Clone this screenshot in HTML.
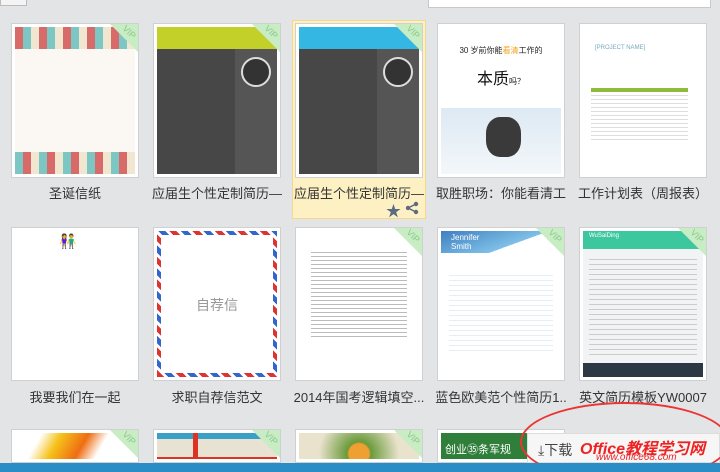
<!DOCTYPE html>
<html><head><meta charset="utf-8">
<style>
*{margin:0;padding:0;box-sizing:border-box}
html{width:720px;height:472px;overflow:hidden}
body{width:720px;height:472px;overflow:hidden;background:#e3e4e6;font-family:"Liberation Sans","Noto Sans CJK SC",sans-serif;position:relative}
.card{position:absolute;width:128px;background:#fff;border:1px solid #cfd0d2;padding:3px;overflow:hidden}
.th{width:100%;height:100%;position:relative;overflow:hidden}
.vip{position:absolute;right:-1px;top:-1px;width:0;height:0;border-top:30px solid #c8ecc4;border-left:30px solid transparent;z-index:3}
.vipt{position:absolute;right:1px;top:3px;font-size:9px;color:#8cc88a;transform:rotate(45deg);z-index:4}
.lab{position:absolute;width:142px;text-align:center;font-size:13px;color:#333;white-space:nowrap;overflow:hidden}
.dk{background:#474747}
</style></head><body>
<div style="position:absolute;left:0;top:0;width:27px;height:6px;background:#f4f4f4;border:1px solid #bbb;border-top:none"></div>
<div style="position:absolute;left:428px;top:0;width:283px;height:8px;background:#fff;border:1px solid #c8c8c8;border-top:none"></div>

<div style="position:absolute;left:292px;top:20px;width:134px;height:199px;background:#fdf0c3;border:1px solid #f4d88c"></div>
<div style="position:absolute;left:386px;top:200px;font-size:15px;color:#5c6b82">★</div>
<svg style="position:absolute;left:405px;top:201px" width="14" height="14" viewBox="0 0 14 14"><circle cx="11" cy="3" r="2.2" fill="#5c6b82"/><circle cx="3" cy="7" r="2.2" fill="#5c6b82"/><circle cx="11" cy="11" r="2.2" fill="#5c6b82"/><path d="M11 3L3 7L11 11" stroke="#5c6b82" stroke-width="1.5" fill="none"/></svg>

<!-- row1 -->
<div class="card" style="left:11px;top:23px;height:155px"><div class="th" style="background:#fbf7f2">
<div style="height:22px;background:repeating-linear-gradient(90deg,#d96a6a 0 8px,#7cc7c4 8px 16px,#f1e6d0 16px 24px)"></div>
<div style="position:absolute;bottom:0;left:0;right:0;height:22px;background:repeating-linear-gradient(90deg,#7cc7c4 0 8px,#d96a6a 8px 16px,#f1e6d0 16px 24px)"></div></div><div class="vip"></div><div class="vipt">VIP</div></div>
<div class="card" style="left:153px;top:23px;height:155px"><div class="th dk"><div style="height:22px;background:#c4d02a"></div><div style="position:absolute;right:0;top:22px;width:42px;bottom:0;background:#555"></div><div style="position:absolute;right:6px;top:30px;width:30px;height:30px;border-radius:50%;background:#333;border:2px solid #ddd"></div></div><div class="vip"></div><div class="vipt">VIP</div></div>
<div class="card" style="left:295px;top:23px;height:155px"><div class="th dk"><div style="height:22px;background:#34b7e2"></div><div style="position:absolute;right:0;top:22px;width:42px;bottom:0;background:#555"></div><div style="position:absolute;right:6px;top:30px;width:30px;height:30px;border-radius:50%;background:#333;border:2px solid #ddd"></div></div><div class="vip"></div><div class="vipt">VIP</div></div>
<div class="card" style="left:437px;top:23px;height:155px"><div class="th" style="background:linear-gradient(#fff 0 55%,#dde9f3 55%,#f3f7fa)">
<div style="position:absolute;top:18px;left:0;right:0;text-align:center;font-size:8px;color:#222">30 岁前你能<span style="color:#f4a21a">看清</span>工作的</div>
<div style="position:absolute;top:38px;left:0;right:0;text-align:center;font-size:16px;color:#111">本质<span style="font-size:8px">吗？</span></div>
<div style="position:absolute;top:90px;left:45px;width:35px;height:40px;background:#3a3a3a;border-radius:40%"></div></div></div>
<div class="card" style="left:579px;top:23px;height:155px"><div class="th" style="background:#fff">
<div style="position:absolute;top:18px;left:12px;font-size:6px;color:#7ab">[PROJECT NAME]</div>
<div style="position:absolute;top:61px;left:8px;width:97px;height:4px;background:#8fba3a"></div>
<div style="position:absolute;top:65px;left:8px;width:97px;height:50px;background:repeating-linear-gradient(#fff 0 3px,#ddd 3px 4px)"></div></div></div>
<div class="lab" style="left:4px;top:183px">圣诞信纸</div>
<div class="lab" style="left:146px;top:183px">应届生个性定制简历—</div>
<div class="lab" style="left:288px;top:183px">应届生个性定制简历—</div>
<div class="lab" style="left:430px;top:183px">取胜职场：你能看清工</div>
<div class="lab" style="left:572px;top:183px">工作计划表（周报表）</div>

<!-- row2 -->
<div class="card" style="left:11px;top:227px;height:154px"><div class="th" style="background:#fff"><div style="position:absolute;top:2px;left:44px;font-size:14px">👫</div></div></div>
<div class="card" style="left:153px;top:227px;height:154px"><div class="th" style="background:repeating-linear-gradient(45deg,#d33 0 5px,#fff 5px 8px,#36c 8px 13px,#fff 13px 16px)"><div style="position:absolute;inset:4px;background:#fff"></div><div style="position:absolute;top:64px;left:0;right:0;text-align:center;font-size:14px;color:#999">自荐信</div></div></div>
<div class="card" style="left:295px;top:227px;height:154px"><div class="th" style="background:#fff"><div style="position:absolute;top:18px;left:12px;right:12px;height:90px;background:repeating-linear-gradient(#fff 0 3px,#bbb 3px 4px)"></div></div><div class="vip"></div><div class="vipt">VIP</div></div>
<div class="card" style="left:437px;top:227px;height:154px"><div class="th" style="background:#fff"><div style="height:22px;background:linear-gradient(160deg,#3f7fbf,#7fc0e8 60%,#fff 60%)"></div><div style="position:absolute;top:2px;left:10px;font-size:8px;color:#fff">Jennifer<br>Smith</div><div style="position:absolute;top:40px;left:8px;right:8px;height:80px;background:repeating-linear-gradient(#fff 0 4px,#e6eef5 4px 5px)"></div></div><div class="vip"></div><div class="vipt">VIP</div></div>
<div class="card" style="left:579px;top:227px;height:154px"><div class="th" style="background:#f2f3f4"><div style="height:18px;background:#3cc79f"></div><div style="position:absolute;top:2px;left:6px;font-size:6px;color:#fff">WuSaiDing</div><div style="position:absolute;bottom:0;left:0;right:0;height:14px;background:#2c3844"></div><div style="position:absolute;top:24px;left:6px;right:6px;height:100px;background:repeating-linear-gradient(#f2f3f4 0 4px,#ccc 4px 5px)"></div></div><div class="vip"></div><div class="vipt">VIP</div></div>
<div class="lab" style="left:4px;top:387px">我要我们在一起</div>
<div class="lab" style="left:146px;top:387px">求职自荐信范文</div>
<div class="lab" style="left:288px;top:387px">2014年国考逻辑填空...</div>
<div class="lab" style="left:430px;top:387px">蓝色欧美范个性简历1..</div>
<div class="lab" style="left:572px;top:387px">英文简历模板YW0007</div>

<!-- row3 -->
<div class="card" style="left:11px;top:429px;height:34px"><div class="th" style="background:linear-gradient(120deg,#fff 20%,#f6c21a 35%,#ef6d12 55%,#fff 70%)"></div><div class="vip"></div><div class="vipt">VIP</div></div>
<div class="card" style="left:153px;top:429px;height:34px"><div class="th" style="background:linear-gradient(#3aa0c8 0 6px,#e8e2d2 6px)"><div style="position:absolute;top:24px;left:0;right:0;height:6px;background:#d32"></div><div style="position:absolute;top:0;left:36px;width:5px;height:40px;background:#d32"></div></div><div class="vip"></div><div class="vipt">VIP</div></div>
<div class="card" style="left:295px;top:429px;height:34px"><div class="th" style="background:radial-gradient(circle at 50% 80%,#f0a030 10px,#6a9a3a 12px,#e9e2cc 40px)"></div><div class="vip"></div><div class="vipt">VIP</div></div>
<div class="card" style="left:437px;top:429px;height:34px"><div class="th" style="background:#2f7e3a"><div style="position:absolute;top:8px;left:4px;font-size:11px;color:#fff">创业㉟条军规</div></div></div>
<div style="position:absolute;left:527px;top:433px;width:193px;height:30px;background:#f6f6f6;border:1px solid #ddd"></div>
<div style="position:absolute;left:538px;top:440px;font-size:14px;color:#444">⤓下载</div>
<div style="position:absolute;left:580px;top:435px;font-size:16px;font-style:italic;font-weight:bold;color:#e22">Office教程学习网</div>
<div style="position:absolute;left:596px;top:452px;font-size:10px;font-style:italic;color:#e22">www.office68.com</div>
<div style="position:absolute;left:520px;top:402px;width:210px;height:80px;border:2px solid #e33;border-radius:50%"></div>
<div style="position:absolute;left:0;top:463px;width:720px;height:9px;background:#2a8dc6"></div>
</body></html>
